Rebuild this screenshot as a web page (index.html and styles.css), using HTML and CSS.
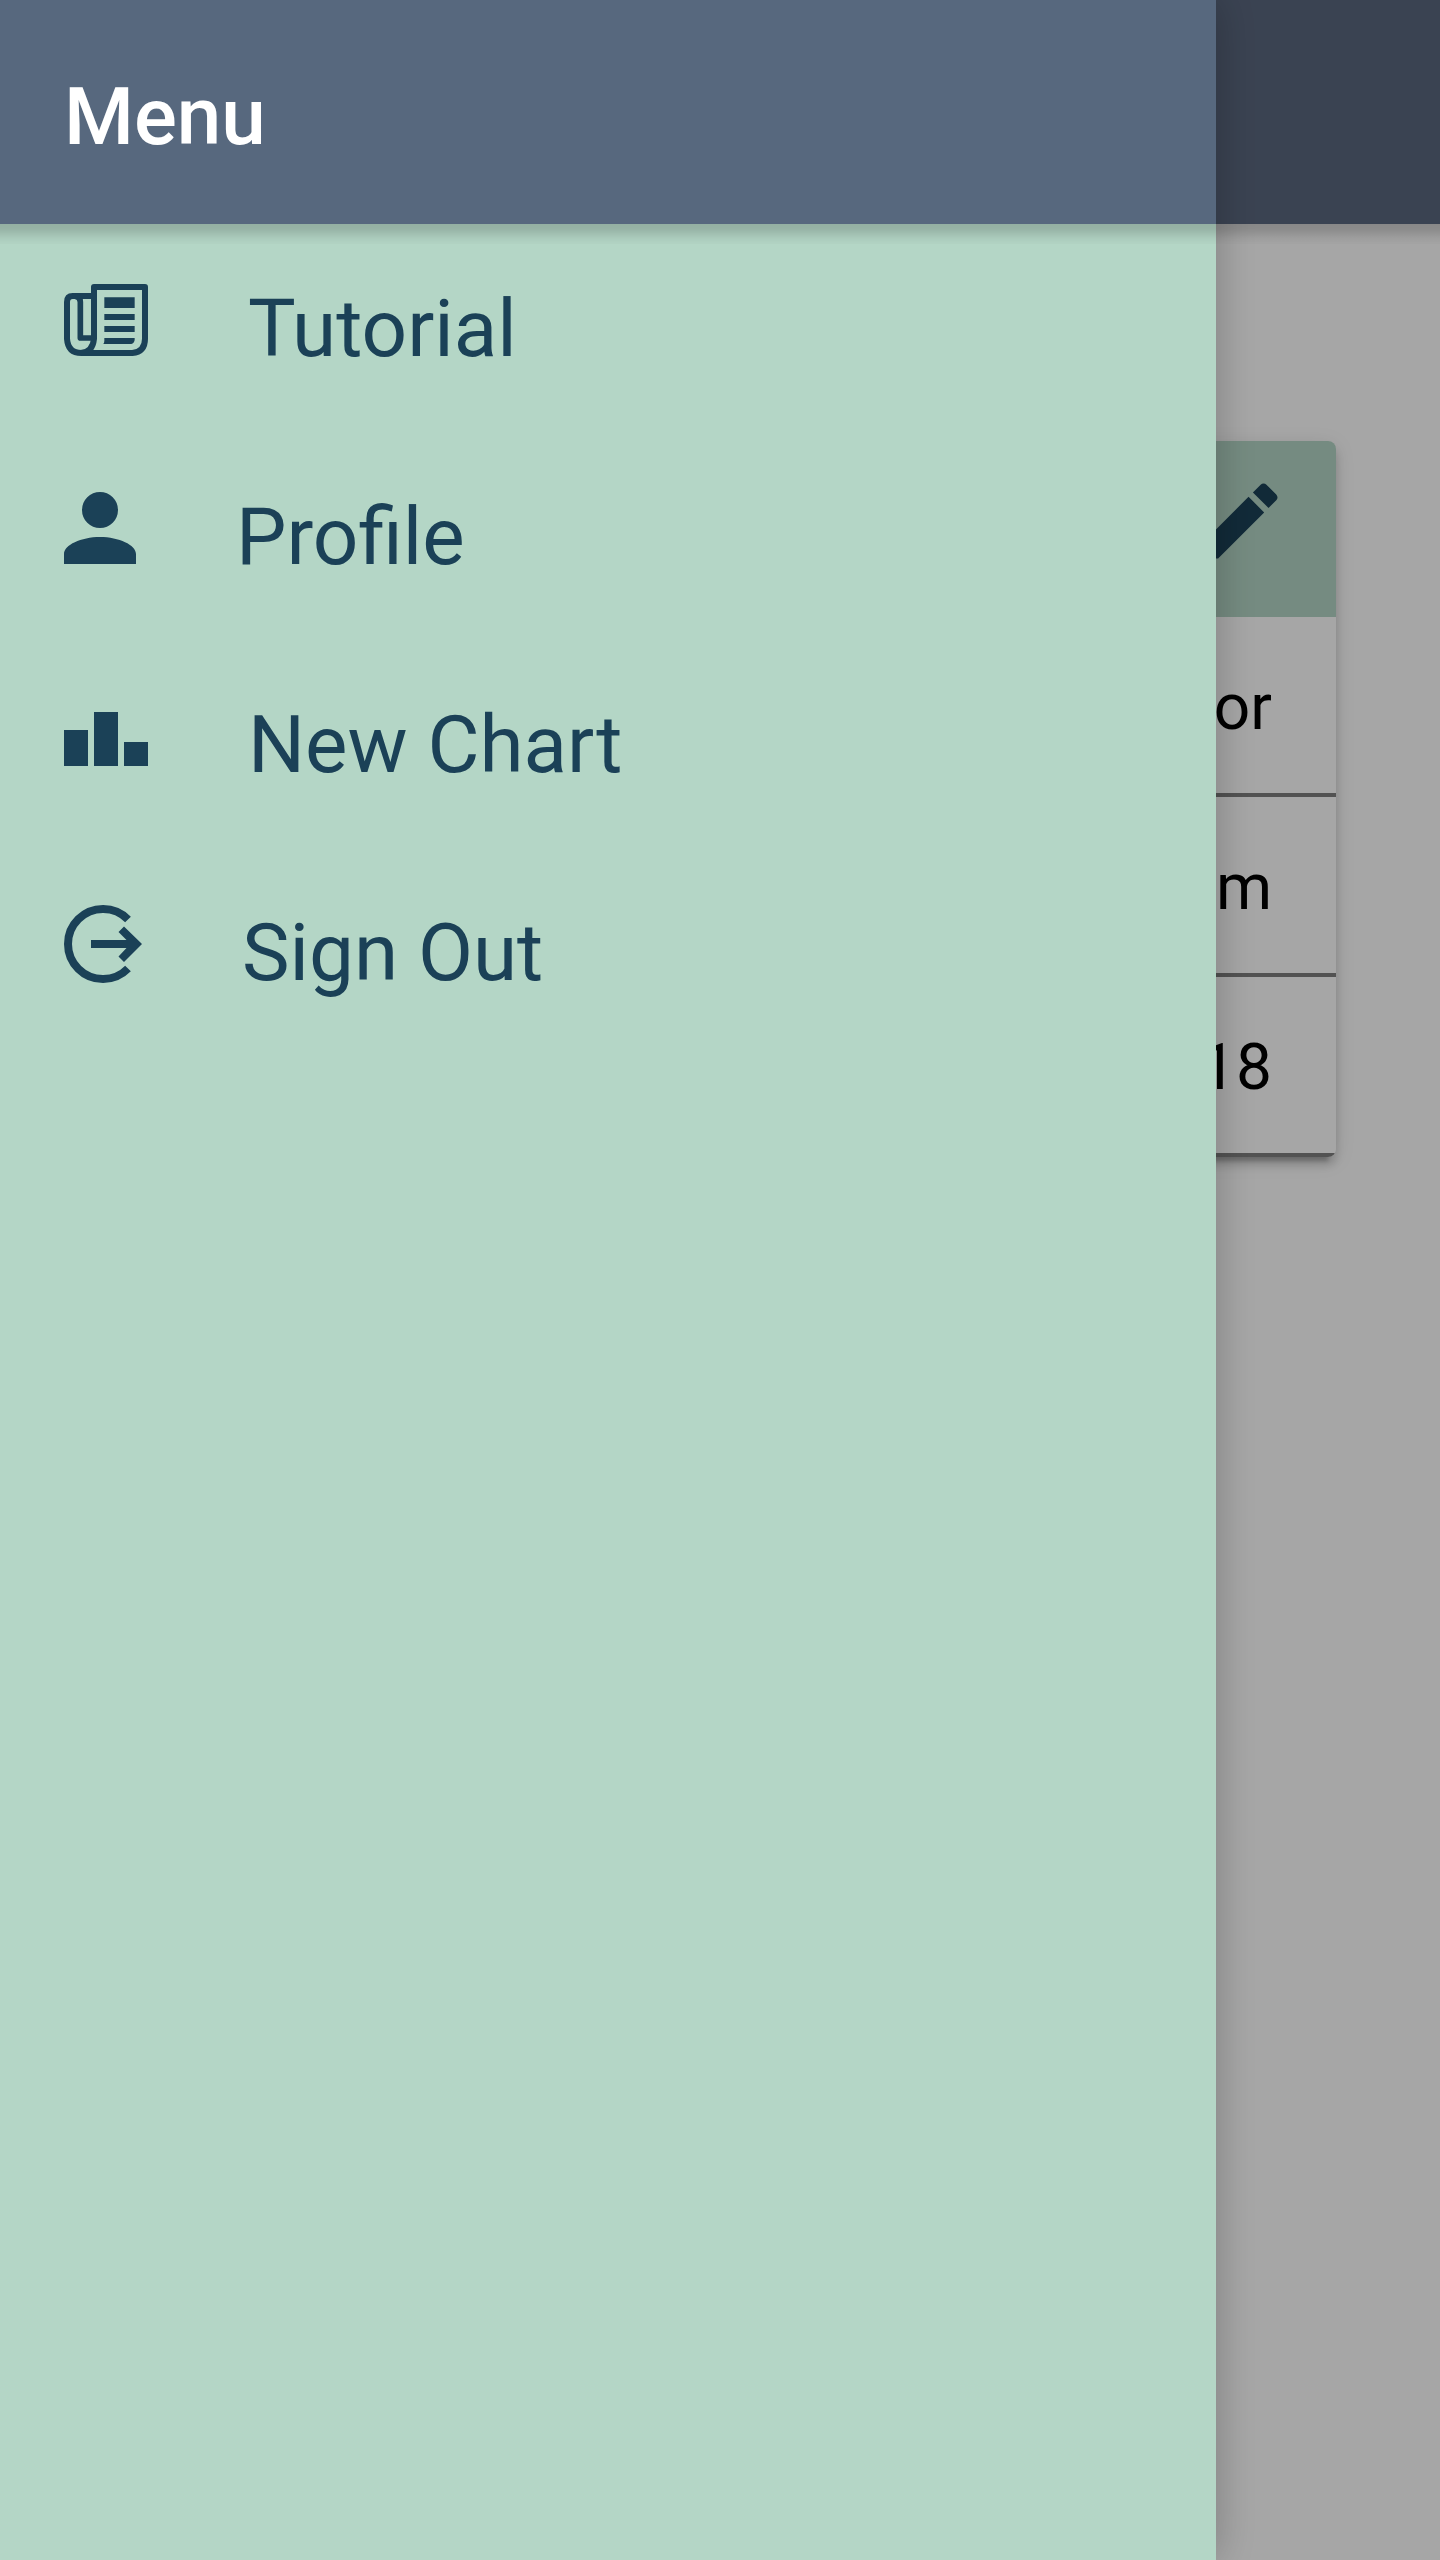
FILE: index.html
```html
<!DOCTYPE html>
<html lang="en">
<head>
<meta charset="utf-8">
<meta name="viewport" content="width=device-width, initial-scale=1">
<title>Menu</title>
<link rel="stylesheet" href="styles.css">
</head>
<body>
<div class="page">
  <header class="bar bar-page"></header>
  <main class="content">
    <section class="card">
      <div class="card-header">
        <button class="edit" type="button" aria-label="Edit">
          <svg class="edit-icon" viewBox="0 0 512 512" aria-hidden="true"><path d="M64 368v80h80l235.727-235.729-79.999-79.998L64 368zm377.602-217.602c8.531-8.531 8.531-21.334 0-29.865l-50.135-50.135c-8.531-8.531-21.334-8.531-29.865 0l-39.468 39.469 79.999 79.998 39.469-39.467z"/></svg>
        </button>
      </div>
      <ul class="card-list">
        <li class="card-row">or</li>
        <li class="card-row">m</li>
        <li class="card-row">18</li>
      </ul>
    </section>
  </main>
</div>
<div class="backdrop"></div>
<aside class="drawer">
  <header class="bar"><h1 class="bar-title">Menu</h1></header>
  <nav class="menu">
    <button class="menu-item" type="button">
      <svg class="icon icon-wide" viewBox="0 -36 252 288" aria-hidden="true">
        <g fill="none" stroke="currentColor" stroke-width="18" stroke-linejoin="round">
          <path d="M90 36H26Q9 36 9 54V164Q12 207 52 207H205Q243 203 243 164V9H90V164Q86 205 50 207"/>
          <path d="M34 37Q49 40 49 54V162H90" stroke-width="17"/>
        </g>
        <path fill="currentColor" d="M121 40h91v32h-91zM121 90h91v18h-91zM121 126h91v18h-91zM121 162h91v6q-2 11-10 12h-84q3-5 3-10z"/>
      </svg>
      <span>Tutorial</span>
    </button>
    <button class="menu-item" type="button">
      <svg class="icon icon-narrow" viewBox="0 -12 72 96" aria-hidden="true"><path fill="currentColor" d="M36 36a18 18 0 1 0 0-36 18 18 0 0 0 0 36zM36 45C17 45 0 53 0 62v10h72V62C72 53 55 45 36 45z"/></svg>
      <span>Profile</span>
    </button>
    <button class="menu-item" type="button">
      <svg class="icon icon-wide" viewBox="0 0 84 96" aria-hidden="true"><path fill="currentColor" d="M0 42h24v36H0zM30 24h24v54H30zM60 54h24v24H60z"/></svg>
      <span>New Chart</span>
    </button>
    <button class="menu-item" type="button">
      <svg class="icon icon-medium" viewBox="0 -9 78 96" aria-hidden="true">
        <path fill="none" stroke="currentColor" stroke-width="8" d="M64 14.500A35 35 0 1 0 64 63.500"/>
        <path fill="currentColor" d="M27 35H62.500L54.500 27 60 21.500 78 39 60 57 54.500 51.500 62.500 43H27z"/>
      </svg>
      <span>Sign Out</span>
    </button>
  </nav>
</aside>
</body>
</html>
```
FILE: styles.css
```css
* {
  box-sizing: border-box;
}

body {
  margin: 0;
  background: #fff;
  color: #000;
  font-family: Roboto, sans-serif;
}

button {
  border: 0;
  background: none;
  color: inherit;
  font: inherit;
  cursor: pointer;
}

.page {
  min-height: 100vh;
}

.bar {
  position: relative;
  display: flex;
  align-items: center;
  height: 224px;
  padding: 10px 64px 0;
  background: #57687e;
  color: #fff;
}

.bar-page {
  background: #5a677e;
}

.bar::after {
  content: "";
  position: absolute;
  top: 100%;
  left: 0;
  right: 0;
  height: 20px;
  background: linear-gradient(rgba(0, 0, 0, 0.18), rgba(0, 0, 0, 0.16) 25%, rgba(0, 0, 0, 0.05) 70%, rgba(0, 0, 0, 0.01));
}

.bar-title {
  margin: 0;
  font-size: 80px;
  font-weight: 500;
}

.content {
  padding: 217px 104px 104px;
}

.card {
  border-radius: 8px;
  background: #fff;
  box-shadow: 0 8px 8px rgba(0, 0, 0, 0.14), 0 12px 4px -8px rgba(0, 0, 0, 0.2), 0 4px 20px rgba(0, 0, 0, 0.12);
  overflow: hidden;
}

.card-header {
  display: flex;
  justify-content: flex-end;
  padding: 30px 46px 46px;
  background: #b4d6c6;
  color: #1b4157;
}

.edit {
  padding: 0;
}

.edit-icon {
  display: block;
  width: 100px;
  height: 100px;
  fill: currentColor;
}

.card-list {
  margin: 0;
  padding: 0;
  list-style: none;
}

.card-row {
  display: flex;
  align-items: center;
  justify-content: flex-end;
  height: 180px;
  padding: 4px 64px 0;
  border-bottom: 4px solid #7f7f7f;
  font-size: 64px;
}

.backdrop {
  position: fixed;
  inset: 0;
  background: rgba(0, 0, 0, 0.35);
}

.drawer {
  position: fixed;
  inset: 0 224px 0 0;
  background: #b4d6c6;
  box-shadow: 0 0 40px rgba(0, 0, 0, 0.25);
}

.menu {
  display: flex;
  flex-direction: column;
  color: #1b4157;
}

.menu-item {
  display: flex;
  align-items: center;
  gap: 100px;
  height: 208px;
  padding: 2px 64px 0;
  font-size: 80px;
  text-align: left;
}

.icon {
  flex: none;
  height: 96px;
  margin-bottom: 18px;
}

.icon-narrow {
  width: 72px;
}

.icon-medium {
  width: 78px;
}

.icon-wide {
  width: 84px;
}
```
